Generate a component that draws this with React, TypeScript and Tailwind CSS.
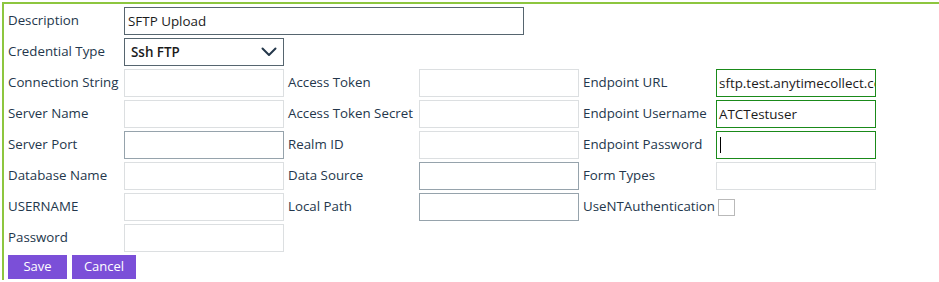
import React from "react";

const font = { fontFamily: '"Open Sans", "Noto Sans", Arial, sans-serif' };

function Label({ children }: { children: React.ReactNode }) {
  return (
    <div className="flex items-center pl-[4px] text-[13.3px] text-[#24374c] whitespace-nowrap h-[28px]">
      {children}
    </div>
  );
}

function Input({
  value = "",
  border = "border-[#dcdfe1]",
  caret = false,
}: {
  value?: string;
  border?: string;
  caret?: boolean;
}) {
  return (
    <div
      className={`h-[28px] w-[160px] border ${border} bg-white flex items-center px-[2px] overflow-hidden whitespace-nowrap text-[13.4px] text-[#1b1b1b]`}
    >
      {value}
      {caret && <span className="inline-block w-[1px] h-[16px] bg-black ml-[1px]" />}
    </div>
  );
}

const Empty = () => <div />;

export default function App() {
  return (
    <div className="w-[939px] h-[282px] bg-white pt-[2px] pl-[2px]" style={font}>
      <div className="border-t-2 border-l-2 border-[#8dc63f] pt-[3px] h-[278px]">
        <div className="grid grid-cols-[120px_160px_135px_160px_137px_160px] gap-y-[3px]">
          {/* Row 1 */}
          <Label>Description</Label>
          <div className="col-span-5">
            <div className="h-[28px] w-[400px] border border-[#56656f] flex items-center px-[3px] text-[13.4px] text-[#1b1b1b]">
              SFTP Upload
            </div>
          </div>
          {/* Row 2 */}
          <Label>Credential Type</Label>
          <div className="col-span-5">
            <div className="h-[28px] w-[160px] border border-[#56656f] flex items-center justify-between pl-[6px] pr-[6px] text-[13.4px] font-semibold text-[#1b1b1b]">
              <span>Ssh FTP</span>
              <svg width="16" height="10" viewBox="0 0 16 10" fill="none">
                <path d="M1.5 1.5 L8 8 L14.5 1.5" stroke="#25384b" strokeWidth="2" strokeLinecap="round" strokeLinejoin="round" />
              </svg>
            </div>
          </div>
          {/* Row 3 */}
          <Label>Connection String</Label>
          <Input />
          <Label>Access Token</Label>
          <Input />
          <Label>Endpoint URL</Label>
          <Input value="sftp.test.anytimecollect.com" border="border-[#1a8a1a]" />
          {/* Row 4 */}
          <Label>Server Name</Label>
          <Input />
          <Label>Access Token Secret</Label>
          <Input />
          <Label>Endpoint Username</Label>
          <Input value="ATCTestuser" border="border-[#1a8a1a]" />
          {/* Row 5 */}
          <Label>Server Port</Label>
          <Input border="border-[#96a3ac]" />
          <Label>Realm ID</Label>
          <Input />
          <Label>Endpoint Password</Label>
          <Input caret border="border-[#1a8a1a]" />
          {/* Row 6 */}
          <Label>Database Name</Label>
          <Input />
          <Label>Data Source</Label>
          <Input border="border-[#96a3ac]" />
          <Label>Form Types</Label>
          <Input />
          {/* Row 7 */}
          <Label>USERNAME</Label>
          <Input />
          <Label>Local Path</Label>
          <Input border="border-[#96a3ac]" />
          <Label>UseNTAuthentication</Label>
          <div className="h-[28px] flex items-center pl-[2px]">
            <div className="w-[17px] h-[17px] border border-[#b9b9b9] bg-white" />
          </div>
          {/* Row 8 */}
          <Label>Password</Label>
          <Input />
          <Empty />
          <Empty />
          <Empty />
          <Empty />
        </div>
        <div className="flex gap-[5px] pl-[4px] mt-[3px]">
          <button className="h-[24px] w-[59px] bg-[#7b4fd8] text-white text-[13px] flex items-center justify-center">
            Save
          </button>
          <button className="h-[24px] w-[64px] bg-[#7b4fd8] text-white text-[13px] flex items-center justify-center">
            Cancel
          </button>
        </div>
      </div>
    </div>
  );
}
